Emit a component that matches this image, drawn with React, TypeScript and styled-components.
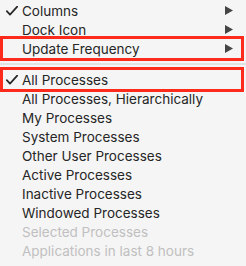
import React from "react";
import styled, { createGlobalStyle } from "styled-components";

const Global = createGlobalStyle`
  html, body { margin: 0; padding: 0; background: #f5f5f5; }
  body { width: 246px; height: 266px; overflow: hidden; }
`;

const Menu = styled.div`
  width: 246px;
  height: 266px;
  background: #f5f5f5;
  display: flex;
  flex-direction: column;
  padding-top: 1px;
  box-sizing: border-box;
  font-family: Inter, "Liberation Sans", sans-serif;
  font-size: 13.5px;
`;

const Row = styled.div<{ $disabled?: boolean; $boxed?: boolean }>`
  position: relative;
  height: 19px;
  display: flex;
  align-items: center;
  padding-left: 22px;
  padding-right: 13px;
  color: ${(p) => (p.$disabled ? "#c0c0c0" : "#262626")};
  white-space: nowrap;
  &::after {
    content: "";
    display: ${(p) => (p.$boxed ? "block" : "none")};
    position: absolute;
    left: 0;
    right: 2px;
    top: -3px;
    bottom: -3px;
    border: 3px solid #fe2a1c;
  }
`;

const Label = styled.span`
  flex: 1;
`;

const Check = styled.svg`
  position: absolute;
  left: 6px;
  top: 5px;
`;

const Arrow = styled.svg`
  flex: none;
`;

const Separator = styled.div`
  height: 12px;
  display: flex;
  align-items: center;
  &::before {
    content: "";
    flex: 1;
    height: 2px;
    background: #e2e2e2;
  }
`;

type Item = { label: string; checked?: boolean; submenu?: boolean; disabled?: boolean; boxed?: boolean };

const top: Item[] = [
  { label: "Columns", checked: true, submenu: true },
  { label: "Dock Icon", submenu: true },
  { label: "Update Frequency", submenu: true, boxed: true },
];

const bottom: Item[] = [
  { label: "All Processes", checked: true, boxed: true },
  { label: "All Processes, Hierarchically" },
  { label: "My Processes" },
  { label: "System Processes" },
  { label: "Other User Processes" },
  { label: "Active Processes" },
  { label: "Inactive Processes" },
  { label: "Windowed Processes" },
  { label: "Selected Processes", disabled: true },
  { label: "Applications in last 8 hours", disabled: true },
];

function MenuRow({ item }: { item: Item }) {
  return (
    <Row $disabled={item.disabled} $boxed={item.boxed}>
      {item.checked && (
        <Check width="12" height="10" viewBox="0 0 12 10">
          <path d="M0.8 5.2 L4 8.6 L11.2 0.6" fill="none" stroke="#262626" strokeWidth="1.7" strokeLinecap="round" strokeLinejoin="round" />
        </Check>
      )}
      <Label>{item.label}</Label>
      {item.submenu && (
        <Arrow width="8" height="9" viewBox="0 0 8 9">
          <path d="M0 0 L8 4.5 L0 9 Z" fill="#454545" />
        </Arrow>
      )}
    </Row>
  );
}

export default function App() {
  return (
    <>
      <Global />
      <Menu>
        {top.map((it) => (
          <MenuRow key={it.label} item={it} />
        ))}
        <Separator />
        {bottom.map((it) => (
          <MenuRow key={it.label} item={it} />
        ))}
      </Menu>
    </>
  );
}
